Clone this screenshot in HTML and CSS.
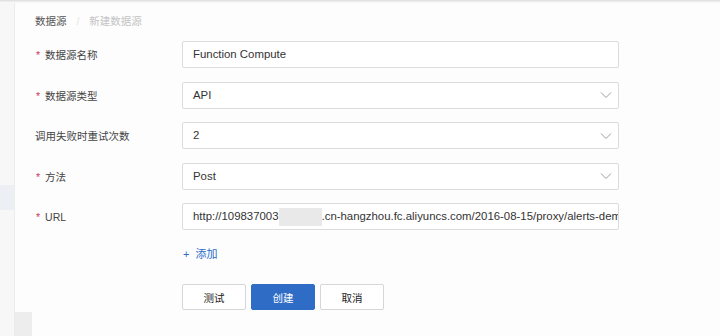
FILE: index.html
```html
<!DOCTYPE html>
<html lang="zh-CN">
<head>
    <meta charset="UTF-8">
    <title>新建数据源</title>
    <link rel="stylesheet" href="styles.css">
</head>
<body>
    <div class="top-shadow"></div>
    <div class="layout">
        <div class="sidebar">
            <div class="side-item active"></div>
        </div>
        <div class="main">
            <div class="breadcrumb">
                <span class="crumb">数据源</span>
                <span class="sep">/</span>
                <span class="crumb current">新建数据源</span>
            </div>
            <div class="form">
                <div class="form-row">
                    <label class="required">数据源名称</label>
                    <div class="field">Function Compute</div>
                </div>
                <div class="form-row">
                    <label class="required">数据源类型</label>
                    <div class="field select">API
                        <svg class="chevron" width="12" height="8" viewBox="0 0 12 8"><path d="M1 1.5 L6 6.5 L11 1.5" fill="none" stroke="#9a9a9a" stroke-width="1"/></svg>
                    </div>
                </div>
                <div class="form-row">
                    <label>调用失败时重试次数</label>
                    <div class="field select">2
                        <svg class="chevron" width="12" height="8" viewBox="0 0 12 8"><path d="M1 1.5 L6 6.5 L11 1.5" fill="none" stroke="#9a9a9a" stroke-width="1"/></svg>
                    </div>
                </div>
                <div class="form-row">
                    <label class="required">方法</label>
                    <div class="field select">Post
                        <svg class="chevron" width="12" height="8" viewBox="0 0 12 8"><path d="M1 1.5 L6 6.5 L11 1.5" fill="none" stroke="#9a9a9a" stroke-width="1"/></svg>
                    </div>
                </div>
                <div class="form-row">
                    <label class="required">URL</label>
                    <div class="field url">http://109837003<span class="masked"></span>.cn-hangzhou.fc.aliyuncs.com/2016-08-15/proxy/alerts-demo</div>
                </div>
                <div class="form-row">
                    <span></span>
                    <a class="add-link">+&nbsp;&nbsp;添加</a>
                </div>
                <div class="form-row actions">
                    <span></span>
                    <div class="buttons">
                        <button type="button" class="btn">测试</button>
                        <button type="button" class="btn primary">创建</button>
                        <button type="button" class="btn">取消</button>
                    </div>
                </div>
            </div>
        </div>
    </div>
    <div class="collapse-toggle"></div>
</body>
</html>
```
FILE: styles.css
```css
body {
    margin: 0;
    height: 336px;
    overflow: hidden;
    background-color: #fdfdfd;
    font-family: "Liberation Sans", "Noto Sans CJK SC", sans-serif;
    font-size: 10.5px;
    color: #333;
    position: relative;
}
.top-shadow {
    position: absolute;
    top: 0;
    left: 0;
    right: 0;
    height: 3px;
    background: linear-gradient(#dcdcdc, #fdfdfd);
}
.layout {
    display: flex;
    height: 336px;
}
.sidebar {
    width: 15px;
    background-color: #f7f7f8;
    border-right: 1px solid #ececec;
    padding-top: 185px;
    box-sizing: border-box;
}
.side-item.active {
    height: 25px;
    background-color: #eceff3;
}
.main {
    flex: 1;
    padding: 14px 0 0 20px;
}
.breadcrumb {
    height: 14px;
    line-height: 14px;
    margin-bottom: 13px;
}
.crumb {
    color: #555;
}
.crumb.current {
    color: #c4c4c4;
}
.sep {
    color: #e4e4e4;
    margin: 0 7px;
}
.form-row {
    display: grid;
    grid-template-columns: 147px 437px;
    align-items: center;
    margin-bottom: 13.5px;
}
.form-row label {
    color: #444;
}
.form-row label.required::before {
    content: "*";
    color: #d2355a;
    margin: 0 5px 0 1px;
}
.field {
    height: 27px;
    box-sizing: border-box;
    border: 1px solid #dcdcdc;
    border-radius: 2px;
    background-color: #fff;
    padding: 0 10px;
    line-height: 25px;
    font-size: 11.4px;
    color: #333;
    white-space: nowrap;
    overflow: hidden;
}
.field.select {
    display: flex;
    justify-content: space-between;
    align-items: center;
    padding-right: 6px;
}
.masked {
    display: inline-block;
    width: 43px;
    height: 18px;
    vertical-align: middle;
    background-color: #e9e9e9;
}
.add-link {
    color: #2c6bc9;
    font-size: 11px;
    margin-left: 1px;
    margin-top: 1px;
    margin-bottom: 10px;
}
.buttons {
    display: flex;
    gap: 5px;
}
.btn {
    width: 64px;
    height: 26px;
    border: 1px solid #d6d6d6;
    border-radius: 2px;
    background-color: #fff;
    color: #222;
    font-family: inherit;
    font-size: 10.5px;
    padding: 0;
}
.btn.primary {
    background-color: #2f6cc6;
    border-color: #2f6cc6;
    color: #fff;
}
.collapse-toggle {
    position: absolute;
    left: 15px;
    bottom: 0;
    width: 17px;
    height: 24px;
    background-color: #ededed;
}
```
